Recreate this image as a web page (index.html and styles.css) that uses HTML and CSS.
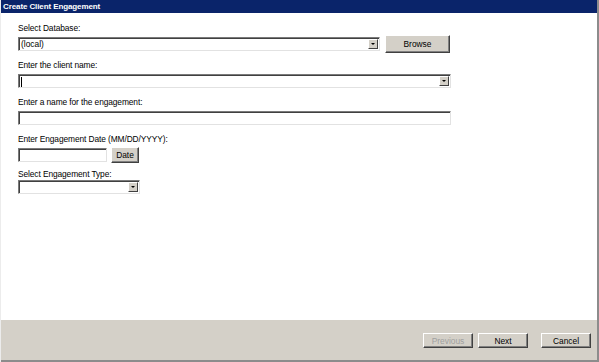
FILE: index.html
```html
<!DOCTYPE html>
<html lang="en">
<head>
  <meta charset="UTF-8">
  <title>Create Client Engagement</title>
  <link rel="stylesheet" href="styles.css">
</head>
<body>
  <div class="window">
    <div class="titlebar">Create Client Engagement</div>

    <div class="content">
      <!-- database -->
      <div class="field">
        <label>Select Database:</label>
        <div class="row">
          <div class="combo wide-db">
            <span class="combo-text">(local)</span>
            <span class="arrow"></span>
          </div>
          <button class="btn browse">Browse</button>
        </div>
      </div>

      <!-- client -->
      <div class="field">
        <label>Enter the client name:</label>
        <div class="combo full">
          <span class="combo-text caret"></span>
          <span class="arrow"></span>
        </div>
      </div>

      <!-- engagement name -->
      <div class="field">
        <label>Enter a name for the engagement:</label>
        <div class="textbox full"></div>
      </div>

      <!-- date -->
      <div class="field">
        <label>Enter Engagement Date (MM/DD/YYYY):</label>
        <div class="row">
          <div class="textbox date"></div>
          <button class="btn date-btn">Date</button>
        </div>
      </div>

      <!-- type -->
      <div class="field tight">
        <label>Select Engagement Type:</label>
        <div class="combo small">
          <span class="combo-text"></span>
          <span class="arrow"></span>
        </div>
      </div>
    </div>

    <div class="footer">
      <button class="btn nav disabled">Previous</button>
      <button class="btn nav">Next</button>
      <button class="btn nav cancel">Cancel</button>
    </div>
  </div>
</body>
</html>
```

FILE: styles.css
```css
body {
  margin: 0;
  background: #fff;
  font-family: "Liberation Sans", Arial, sans-serif;
  font-size: 8.4px;
  color: #000;
}

.window {
  width: 599px;
  height: 362px;
  display: flex;
  flex-direction: column;
  box-sizing: border-box;
  border-right: 2px solid #8c8c8c;
  border-left: 1px solid #ececec;
}

.titlebar {
  height: 13px;
  line-height: 13px;
  background: #0a246a;
  color: #fff;
  font-weight: bold;
  padding-left: 2px;
  font-size: 8px;
  letter-spacing: -0.1px;
}

.content {
  flex: 1;
  padding: 9px 0 0 17px;
  display: flex;
  flex-direction: column;
  gap: 8px;
}

.field {
  display: flex;
  flex-direction: column;
  gap: 3px;
}

.field.tight {
  margin-top: -2px;
  gap: 0;
}

.field label {
  line-height: 13px;
  height: 12px;
  letter-spacing: -0.1px;
}

.row {
  display: flex;
  align-items: center;
  height: 14px;
  gap: 6px;
}

.combo, .textbox {
  box-sizing: border-box;
  height: 14px;
  border: 1px solid;
  border-color: #7a7a7a #e2e2e2 #e2e2e2 #7a7a7a;
  box-shadow: inset 1px 1px 0 #404040;
  background: #fff;
  display: flex;
  align-items: center;
  flex-shrink: 0;
}

.combo-text {
  flex: 1;
  padding-left: 2px;
  line-height: 12px;
}

.caret::before {
  content: "";
  display: inline-block;
  width: 1px;
  height: 10px;
  background: #000;
  vertical-align: middle;
}

.arrow {
  width: 10px;
  height: 10px;
  margin-right: 1px;
  box-sizing: border-box;
  background: #d4d0c8;
  border: 1px solid;
  border-color: #fff #404040 #404040 #fff;
  position: relative;
}

.arrow::after {
  content: "";
  position: absolute;
  left: 2px;
  top: 3px;
  border-left: 2px solid transparent;
  border-right: 2px solid transparent;
  border-top: 2px solid #000;
}

.wide-db { width: 362px; }
.full { width: 433px; }
.date { width: 89px; }
.small { width: 122px; }

.btn {
  box-sizing: border-box;
  font-family: inherit;
  font-size: 8.4px;
  background: #d4d0c8;
  color: #000;
  border: 1px solid;
  border-color: #fff #404040 #404040 #fff;
  box-shadow: inset -1px -1px 0 #808080;
  padding: 0;
  margin: 0;
  flex-shrink: 0;
}

.browse {
  width: 65px;
  height: 18px;
  margin-left: -1px;
}

.date-btn {
  width: 28px;
  height: 16px;
  margin-left: -2px;
}

.footer {
  height: 42px;
  box-sizing: border-box;
  background: #d4d0c8;
  border-bottom: 2px solid #8c8c8c;
  display: flex;
  justify-content: flex-end;
  align-items: center;
  gap: 5px;
  padding: 1px 6px 0 0;
}

.nav {
  width: 50px;
  height: 15px;
}

.cancel {
  margin-left: 8px;
}

.disabled {
  color: #a0a0a0;
}
```
